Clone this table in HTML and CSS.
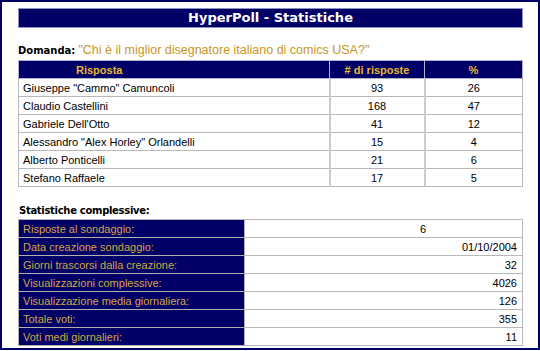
FILE: index.html
```html
<!DOCTYPE html>
<html lang="it">
<head>
  <meta charset="UTF-8" />
  <title>HyperPoll - Statistiche</title>
  <link rel="stylesheet" href="styles.css">
</head>
<body>
  <div class="frame">
    <h1 class="title">HyperPoll - Statistiche</h1>

    <p class="question"><b>Domanda:</b><span class="q-text">"Chi è il miglior disegnatore italiano di comics USA?"</span></p>

    <table class="results">
      <tr>
        <th class="c-name">Risposta</th>
        <th class="c-count"># di risposte</th>
        <th class="c-pct">%</th>
      </tr>
      <tr><td>Giuseppe "Cammo" Camuncoli</td><td class="num">93</td><td class="num">26</td></tr>
      <tr><td>Claudio Castellini</td><td class="num">168</td><td class="num">47</td></tr>
      <tr><td>Gabriele Dell'Otto</td><td class="num">41</td><td class="num">12</td></tr>
      <tr><td>Alessandro "Alex Horley" Orlandelli</td><td class="num">15</td><td class="num">4</td></tr>
      <tr><td>Alberto Ponticelli</td><td class="num">21</td><td class="num">6</td></tr>
      <tr><td>Stefano Raffaele</td><td class="num">17</td><td class="num">5</td></tr>
    </table>

    <h2 class="subtitle">Statistiche complessive:</h2>

    <table class="stats">
      <tr><th>Risposte al sondaggio:</th><td class="first">6</td></tr>
      <tr><th>Data creazione sondaggio:</th><td>01/10/2004</td></tr>
      <tr><th>Giorni trascorsi dalla creazione:</th><td>32</td></tr>
      <tr><th>Visualizzazioni complessive:</th><td>4026</td></tr>
      <tr><th>Visualizzazione media giornaliera:</th><td>126</td></tr>
      <tr><th>Totale voti:</th><td>355</td></tr>
      <tr><th>Voti medi giornalieri:</th><td>11</td></tr>
    </table>
  </div>
</body>
</html>
```

FILE: styles.css
```css
body {
  margin: 0;
  background: #fff;
  font-family: "Liberation Sans", Arial, sans-serif;
  font-size: 11px;
  color: #000;
}
.frame {
  box-sizing: border-box;
  width: 540px;
  height: 350px;
  border: 2px solid #000066;
  padding: 6px 15px 0 16px;
}
.title {
  margin: 0;
  height: 18px;
  line-height: 18px;
  background: #000066;
  border: 1px solid #9090c0;
  color: #fff;
  text-align: center;
  font-family: "DejaVu Sans", Verdana, sans-serif;
  font-size: 13px;
  font-weight: bold;
}
.question {
  margin: 14px 0 2px 0;
  height: 16px;
  line-height: 16px;
  font-family: "DejaVu Sans", Verdana, sans-serif;
  font-size: 10px;
}
.q-text {
  margin-left: 3px;
  color: #c8961e;
  font-family: "Liberation Sans", Arial, sans-serif;
  font-size: 12.5px;
}
table {
  width: 505px;
  border-collapse: collapse;
}
.results th {
  height: 17px;
  padding: 0;
  background: #000066;
  color: #e8b830;
  font-weight: bold;
  font-size: 11px;
  border: 1px solid #b0b0c8;
}
.results th.c-name {
  width: 311px;
  text-align: left;
  padding-left: 57px;
  box-sizing: border-box;
}
.results th.c-count {
  width: 94px;
}
.results td {
  height: 17px;
  padding: 0 0 0 4px;
  border: 1px solid #b8b8b8;
}
.results td.num {
  text-align: center;
  padding: 0;
}
.results td + td {
  border-left: 2px solid #c8c8d8;
}
.subtitle {
  margin: 18px 0 2px 1px;
  font-family: "DejaVu Sans", Verdana, sans-serif;
  font-size: 10px;
  font-weight: bold;
  letter-spacing: -0.3px;
  line-height: 12px;
}
.stats th {
  width: 221px;
  height: 17px;
  padding: 0 0 0 4px;
  background: #000066;
  color: #d4a640;
  font-weight: normal;
  text-align: left;
  border: 1px solid #b0b0b0;
}
.stats td {
  height: 17px;
  padding: 0 5px 0 0;
  text-align: right;
  border: 1px solid #b8b8b8;
}
.stats td.first {
  text-align: left;
  padding-left: 175px;
}
```
